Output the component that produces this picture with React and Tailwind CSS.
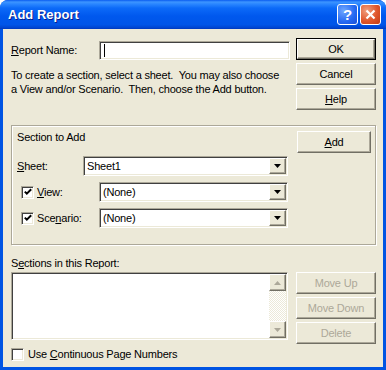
const raised = 'bg-[#ECE9D8] border border-t-white border-l-white border-r-[#716F64] border-b-[#716F64] shadow-[inset_-1px_-1px_0_#ACA899]'
const sunken = 'bg-white border border-t-[#ACA899] border-l-[#ACA899] border-r-white border-b-white shadow-[inset_1px_1px_0_#404040,inset_-1px_-1px_0_#ECE9D8]'

function Btn({ children, className = '', disabled, def }) {
  const inner = (
    <div className={`h-full w-full flex items-center justify-center ${raised} ${disabled ? 'text-[#ACA899]' : 'text-black'}`}>
      {children}
    </div>
  )
  if (def) return <div className={`border border-black ${className}`}>{inner}</div>
  return <div className={className}>{inner}</div>
}

function Arrow({ up, color = '#000' }) {
  return (
    <svg width="7" height="4" viewBox="0 0 7 4">
      <path d={up ? 'M0 4h7L3.5 0z' : 'M0 0h7L3.5 4z'} fill={color} />
    </svg>
  )
}

function Combo({ value, className = '' }) {
  return (
    <div className={`h-[20px] flex items-center ${sunken} ${className}`}>
      <span className="flex-1 pl-[3px] leading-none">{value}</span>
      <div className={`w-[17px] h-[16px] mr-[1px] flex items-center justify-center ${raised}`}>
        <Arrow />
      </div>
    </div>
  )
}

function Check({ checked }) {
  return (
    <div className={`w-[13px] h-[13px] shrink-0 flex items-center justify-center ${sunken}`}>
      {checked && (
        <svg width="8" height="8" viewBox="0 0 8 8">
          <polyline points="0.8,3.6 2.8,5.6 7.2,1.2" stroke="#000" strokeWidth="2" fill="none" />
        </svg>
      )}
    </div>
  )
}

export default function App() {
  return (
    <div className="w-[386px] h-[370px] flex flex-col bg-[#0054E3] rounded-t-[8px] overflow-hidden font-['Liberation_Sans',Arial,sans-serif] text-[11px] tracking-[-0.2px] text-black">
      {/* title bar */}
      <div className="h-[29px] shrink-0 flex items-center pl-[8px] pr-[5px] bg-[linear-gradient(to_bottom,#0A5CF0_0%,#3D95FF_7%,#2A86FF_14%,#0C6AF8_28%,#0058EE_55%,#0055E8_85%,#0046D2_95%,#0038BC_100%)]">
        <span className="flex-1 font-bold text-[13px] tracking-normal text-white [text-shadow:1px_1px_0_#0A1E8C]">Add Report</span>
        <div className="w-[21px] h-[21px] rounded-[3px] border border-white flex items-center justify-center bg-[radial-gradient(circle_at_30%_30%,#6FA8FF,#2468F2_60%,#1A4FD6)] text-white font-bold text-[15px] leading-none">?</div>
        <div className="w-[21px] h-[21px] ml-[2px] rounded-[3px] border border-white flex items-center justify-center bg-[radial-gradient(circle_at_30%_30%,#F0A080,#E0572C_55%,#C23A14)]">
          <svg width="11" height="11" viewBox="0 0 11 11">
            <path d="M1.5 1.5l8 8M9.5 1.5l-8 8" stroke="#fff" strokeWidth="2.2" />
          </svg>
        </div>
      </div>

      {/* body */}
      <div className="flex-1 mx-[3px] mb-[3px] bg-[#ECE9D8] pl-[8px] pr-[7px] pt-[9px] flex flex-col">
        <div className="flex justify-between">
          <div className="flex flex-col pt-[3px]">
            <div className="flex items-center">
              <span className="w-[88px]"><span className="underline">R</span>eport Name:</span>
              <div className={`w-[191px] h-[19px] flex items-center pl-[4px] ${sunken}`}>
                <div className="w-px h-[13px] bg-black" />
              </div>
            </div>
            <p className="mt-[8px] leading-[14px]">
              To create a section, select a sheet.&nbsp; You may also choose<br />
              a View and/or Scenario.&nbsp; Then, choose the Add button.
            </p>
          </div>
          <div className="w-[80px] flex flex-col gap-[3px]">
            <Btn def className="h-[22px]">OK</Btn>
            <Btn className="h-[22px]">Cancel</Btn>
            <Btn className="h-[22px]"><span className="underline">H</span>elp</Btn>
          </div>
        </div>

        {/* section to add */}
        <div className="mt-[15px] h-[120px] w-[365px] flex border border-[#ACA899] shadow-[inset_1px_1px_0_#fff,1px_1px_0_#fff] pl-[5px] pr-[4px] pt-[4px]">
          <div className="w-[271px] flex flex-col">
            <span className="leading-[14px]">Section to Add</span>
            <div className="mt-[12px] flex items-center">
              <span className="w-[66px]"><span className="underline">S</span>heet:</span>
              <Combo value="Sheet1" className="w-[205px]" />
            </div>
            <div className="mt-[6px] flex items-center">
              <div className="w-[82px] flex items-center pl-[4px] gap-[3px]">
                <Check checked />
                <span><span className="underline">V</span>iew:</span>
              </div>
              <Combo value="(None)" className="w-[189px]" />
            </div>
            <div className="mt-[6px] flex items-center">
              <div className="w-[82px] flex items-center pl-[4px] gap-[3px]">
                <Check checked />
                <span>Sce<span className="underline">n</span>ario:</span>
              </div>
              <Combo value="(None)" className="w-[189px]" />
            </div>
          </div>
          <div className="ml-[9px] mt-[1px]">
            <Btn className="w-[74px] h-[22px]"><span className="underline">A</span>dd</Btn>
          </div>
        </div>

        {/* sections in report */}
        <div className="flex justify-between mt-[11px]">
          <div className="flex flex-col">
            <span className="leading-[14px]">S<span className="underline">e</span>ctions in this Report:</span>
            <div className={`mt-[2px] w-[277px] h-[68px] flex ${sunken}`}>
              <div className="flex-1" />
              <div className="w-[17px] my-[1px] mr-[1px] flex flex-col bg-[repeating-conic-gradient(#ECE9D8_0_25%,#ffffff_0_50%)] bg-[length:2px_2px]">
                <div className={`h-[17px] flex items-center justify-center ${raised}`}><Arrow up color="#ACA899" /></div>
                <div className="flex-1" />
                <div className={`h-[17px] flex items-center justify-center ${raised}`}><Arrow color="#ACA899" /></div>
              </div>
            </div>
            <div className="mt-[6px] flex items-center gap-[4px]">
              <Check />
              <span>Use <span className="underline">C</span>ontinuous Page Numbers</span>
            </div>
          </div>
          <div className="w-[80px] pt-[16px] flex flex-col gap-[3px]">
            <Btn disabled className="h-[22px]">Move Up</Btn>
            <Btn disabled className="h-[22px]">Move Down</Btn>
            <Btn disabled className="h-[22px]">Delete</Btn>
          </div>
        </div>
      </div>
    </div>
  )
}
